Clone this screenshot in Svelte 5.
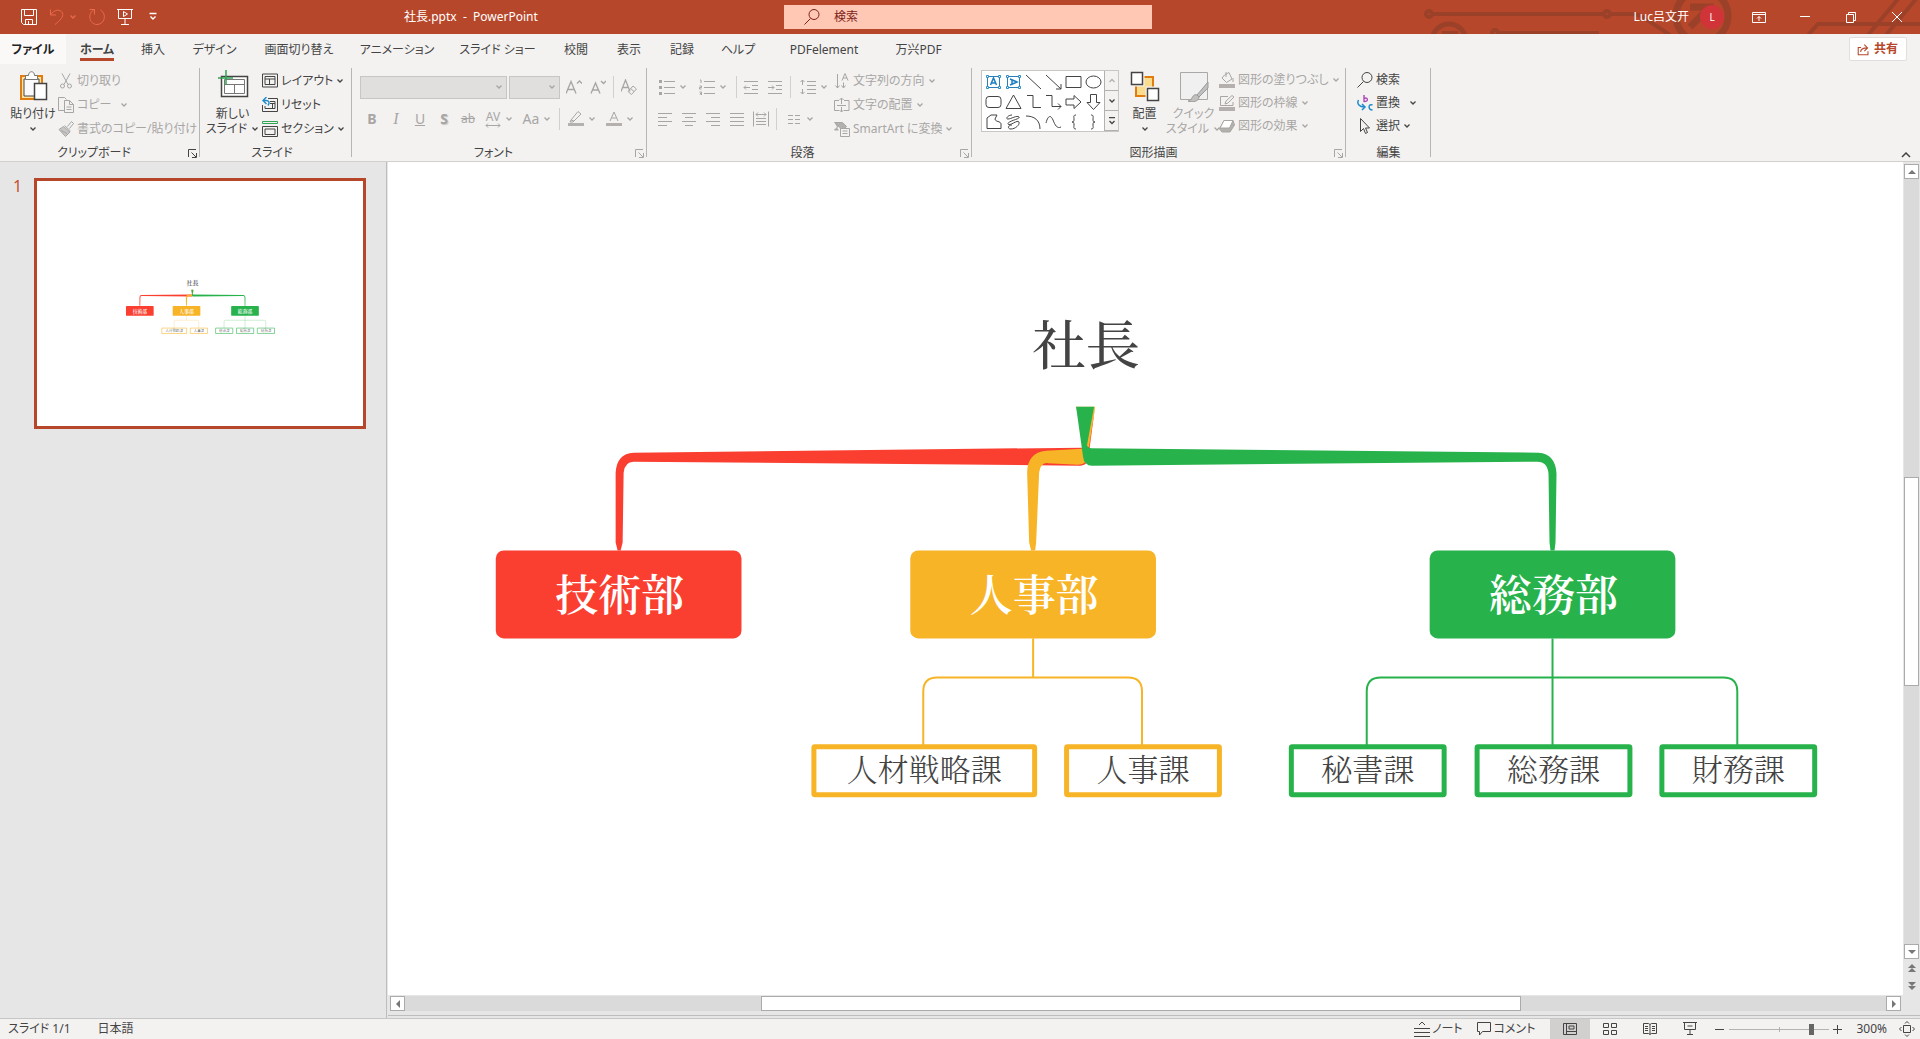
<script>
  const tabs = ['ファイル', 'ホーム', '挿入', 'デザイン', '画面切り替え', 'アニメーション', 'スライド ショー', '校閲', '表示', '記録', 'ヘルプ', 'PDFelement', '万兴PDF'];

  const departments = [
    { name: '技術部', x: 495, color: '#fa3e30' },
    { name: '人事部', x: 910, color: '#f7b427' },
    { name: '総務部', x: 1430, color: '#27b24c' }
  ];

  const sections = [
    { name: '人材戦略課', x: 811, width: 226, color: '#f7b427' },
    { name: '人事課', x: 1064, width: 158, color: '#f7b427' },
    { name: '秘書課', x: 1289, width: 158, color: '#27b24c' },
    { name: '総務課', x: 1475, width: 158, color: '#27b24c' },
    { name: '財務課', x: 1660, width: 158, color: '#27b24c' }
  ];

  // 16x16 icons, drawn with the current text colour
  const icons = {
    save: '<path d="M.5.5h15v15H2.5l-2-2zM3.500.5v6h9v-6M4.500 15.500v-5h7v5M7.500 12v3.500"/>',
    undo: '<path d="M1.500.5v5.500h5.500M1.500 6C5 .5 11-.5 13.500 4c1.500 3.500-3 8-7.500 11.500"/>',
    redo: '<path d="M.5.5h5v5M5.500.5C-2 4 0 15.500 8 15.500s10-11 3.500-14.500"/>',
    present: '<path d="M0 .5h16M1.500.5v9h13v-9M8 9.500v6M4 15.500h8"/><path d="M6.500 2.500v5l4-2.500z"/>',
    customize: '<path d="M4.500 4.500h7M5.500 7.500L8 10l2.500-2.500" stroke-width="1.400"/>',
    search: '<circle cx="10" cy="5.500" r="5"/><path d="M6.500 9.500L.5 15.500"/>',
    ribbon: '<path d="M1.500 3.500h13v10h-13zM1.500 5.500h13M8 12V7.500M6 9.500l2-2 2 2"/>',
    minimize: '<path d="M3 7.500h10"/>',
    restore: '<path d="M3.500 5.500h7v8h-7zM5.500 5.500v-2h7v8h-2"/>',
    close: '<path d="M3 3l10 10M13 3L3 13"/>',
    share: '<path d="M5 5.500H1.500v9h12V10M4.500 11c0-4 3-5 8-5M9 2l4 4-4 4" stroke-width="1.300"/>',
    cut: '<path d="M4 .5l6 11M12 .5l-6 11"/><circle cx="4.500" cy="13" r="2"/><circle cx="11.500" cy="13" r="2"/>',
    copy: '<path d="M6.500 13.500H.5V.5h6l2 2M6.500 3.500h5l4 4v8h-9zM11.500 3.500v4h4M8.500 10h5M8.500 12.500h5"/>',
    brush: '<path d="M9.500 5.500l4-5 2 2-4 5"/><path d="M6.500 4.500l6 5.500"/><path d="M5.500 5.500L1 8.500l6.500 7L12 11z" fill="#c8c6c4"/><path d="M3 9.500l6 3"/>',
    layout: '<path d="M.5 1h15v13H.5zM3 3.500h10v8H3zM3 6h10M7.500 6v5.500"/>',
    reset: '<path d="M6 1.500h9.500v13H.5V8M8 4.500h5v7H3V9M10.500 6.500v5M8 6.500h5"/><path d="M4.500 0L1 3.500 4.500 7M1 3.500h3c3 0 4 2 2 5" stroke="#1e8bcd" stroke-width="1.400"/>',
    section: '<path d="M.5 5.500h15v10H.5zM3 8h10v5.500H3z"/><path d="M.5.500h15v2H.5z" stroke="#31a354"/>',
    grow: '<path d="M0 14.500L5 2.500l5 12M2 10.500h6M11 4.500l2.500-2.500L16 4.500" stroke-width="1.400"/>',
    shrink: '<path d="M1 14.500L5.500 4l4.500 10.500M2.500 11h6M11 2l2.500 2.500L16 2" stroke-width="1.400"/>',
    clear: '<path d="M0 12.500L4.500 1 9 12.500M2 8.500h5" stroke-width="1.300"/><path d="M7 12.500l5-5.500 3.500 3-5 5.500zM9.500 9.500l3.500 3"/>',
    marker: '<path d="M3 9L10 .5 13 3 6 10zM3 9l-1 2h3l1-1"/><path d="M0 13.500h16" stroke-width="3" stroke="#b3b0ad"/>',
    fontcolor: '<path d="M4 10L8 1l4 9M5.500 7h5"/><path d="M0 13.500h16" stroke-width="3" stroke="#b3b0ad"/>',
    bullets: '<path d="M5 2.500h11M5 8.500h11M5 14.500h11"/><path d="M0 2.500h3M0 8.500h3M0 14.500h3" stroke-width="3"/>',
    numbers: '<path d="M5 2.500h11M5 8.500h11M5 14.500h11M1 1h1v3M.5 7h2v1.500h-2V10h2M.5 13h2v3h-2M1 14.500h1.500"/>',
    outdent: '<path d="M1 2.500h14M9 6.500h6M9 10.500h6M1 14.500h14M7 8.500H1M3 6.500l-2 2 2 2"/>',
    indent: '<path d="M1 2.500h14M9 6.500h6M9 10.500h6M1 14.500h14M1 8.500h6M5 6.500l2 2-2 2"/>',
    line: '<path d="M7 2.500h9M7 6.500h9M7 10.500h9M7 14.500h9M2.500 1v5M2.500 10v5M.5 3l2-2 2 2M.5 13l2 2 2-2"/>',
    left: '<path d="M1 2.500h14M1 6.500h9M1 10.500h14M1 14.500h9"/>',
    center: '<path d="M1 2.500h14M4 6.500h8M1 10.500h14M4 14.500h8"/>',
    right: '<path d="M1 2.500h14M6 6.500h9M1 10.500h14M6 14.500h9"/>',
    justify: '<path d="M1 2.500h14M1 6.500h14M1 10.500h14M1 14.500h14"/>',
    distribute: '<path d="M.5.5v15M15.500.5v15M3 7.500h10M3 10.500h10M3 13.500h10M3 3.500h10M5 1.500l-2 2 2 2M11 1.500l2 2-2 2"/>',
    columns: '<path d="M2 4.500h5M2 8.500h5M2 12.500h5M9 4.500h5M9 8.500h5M9 12.500h5"/>',
    direction: '<path d="M3.500 1v14M1.500 12.500l2 2.500 2-2.500M9.500 9.500v5M7.500 12.500l2 2.500 2-2.500M8 7.500l3-7 3 7M9 5h4"/>',
    valign: '<path d="M5 3.500H.5v10H5M10 3.500h5v10h-5M3 8.500h9M7.500 7V1M5.500 3l2-2 2 2M7.500 10v5M5.500 13l2 2 2-2"/>',
    smartart: '<path d="M.5 1.500h8l4 4-2 2H6M.5 1.500l4 3.500-4 4h4" fill="#b3b0ad"/><path d="M6.500 7.500h9v8h-9zM8.500 10h5M8.500 12.500h5" fill="#f3f2f1"/>',
    fill: '<path d="M5.500 3L10 .5 13 7l-5.500 3.500L3 6zM7 0v5M14 6v4"/><path d="M0 14h16" stroke-width="4" stroke="#b3b0ad"/>',
    outline: '<path d="M9 1.500H1.500v9H14V7M6 9l1-3L13 .5 15 2 9 8z"/><path d="M0 14h16" stroke-width="4" stroke="#b3b0ad"/>',
    effects: '<path d="M5 2.500h9L15.500 7 11 14H3L.5 11z" fill="#b3b0ad"/><path d="M5 2.500h9L10.500 10H1z" fill="#fff"/>',
    replace: '<path d="M7 0v7M7 3.500c4-2 5 3.500 0 3" stroke="#ad48b5" stroke-width="1.400"/><path d="M15.500 10c-4-2-5 5 0 5" stroke="#1e8bcd" stroke-width="1.500"/><path d="M1.500 5c-2 4 1 7 6 7M5 9l3 3-3 3" stroke="#1e8bcd" stroke-width="1.500"/>',
    select: '<path d="M3.500.5v13l3-3 2 5 2-1-2-4.500h4z"/>',
    notes: '<path d="M0 7.500h16M0 11.500h16M0 15.500h16M5 4l3-3 3 3"/>',
    comment: '<path d="M1.500 1.500h13v9h-8l-3 3.500v-3.500h-2z"/>',
    normal: '<path d="M1.500 2.500h13v11h-13zM4.500 2.500v11M4.500 10.500h10M7 5h5v3H7z"/>',
    sorter: '<path d="M1.500 2.500h5v4h-5zM9.500 2.500h5v4h-5zM1.500 9.500h5v4h-5zM9.500 9.500h5v4h-5z"/>',
    reading: '<path d="M8 3.500v10M1.500 2.500h5L8 3.500l1.500-1h5v10h-5L8 13.500l-1.500-1h-5zM3 5.500h3M3 7.500h3M3 9.500h3M10 5.500h3M10 7.500h3M10 9.500h3"/>',
    show: '<path d="M1 1.500h14M2.500 1.500v7h11v-7M8 8.500v5M5 13.500h6M5.500 5h5"/>',
    fit: '<path d="M4.500 4.500h7v7h-7zM6 2.500l2-2 2 2M6 13.500l2 2 2-2M2.500 6l-2 2 2 2M13.500 6l2 2-2 2"/>'
  };

  const shapes = [
    '<path d="M2.500 3.500h12v11h-12z" stroke="#2a7fb8"/><path d="M5.500 12l3-7 3 7M6.500 10h4" stroke="#1e7fc0" stroke-width="1.500"/><path d="M1.500 2.500h2v2h-2zM13.500 2.500h2v2h-2zM1.500 13.500h2v2h-2zM13.500 13.500h2v2h-2z" stroke="#2a8fc8" fill="#fff"/>',
    '<path d="M2.500 3.500h12v11h-12z" stroke="#2a7fb8"/><path d="M5 6l7 3-7 3M7 7v4" stroke="#1e7fc0" stroke-width="1.500"/><path d="M1.500 2.500h2v2h-2zM13.500 2.500h2v2h-2zM1.500 13.500h2v2h-2zM13.500 13.500h2v2h-2z" stroke="#2a8fc8" fill="#fff"/>',
    '<path d="M1 2l15 14"/>',
    '<path d="M1 2l15 14M16 11v5h-5"/>',
    '<path d="M1 3.500h15v11H1z"/>',
    '<ellipse cx="8.500" cy="9" rx="7.500" ry="6"/>',
    '<rect x="1" y="3.500" width="15" height="11" rx="3"/>',
    '<path d="M8.500 2L16 15.500H1z"/>',
    '<path d="M2 2.500h6v12h8"/>',
    '<path d="M1 2.500h6v11h9M13 10.500l3 3-3 3"/>',
    '<path d="M1 6h8V2.500L16 9l-7 6.500V12H1z"/>',
    '<path d="M5.500 1.500h6v8H15l-6.500 7-6.500-7h3.500z"/>',
    '<path d="M2 15.500V5l4-3h6l-2 4c0 3 6 2 6 5v4.500z"/>',
    '<path d="M7 2C3 2 0 6 3 6s9-4 11-2-12 4-11 7 10-5 11-2-4 7-8 7-3-4 1-4"/>',
    '<path d="M1 3c8 0 14 4 14 13"/>',
    '<path d="M1 10c2-8 5-8 7-3s4 9 8 7"/>',
    '<path d="M11 2C8 2 9 4 9 6s0 3-2 3c2 0 2 1 2 3s-1 4 2 4"/>',
    '<path d="M6 2c3 0 2 2 2 4s0 3 2 3c-2 0-2 1-2 3s1 4-2 4"/>'
  ];
</script>

{#snippet icon(name)}
  <svg class="icon" viewBox="0 0 16 16" aria-hidden="true">{@html icons[name]}</svg>
{/snippet}

{#snippet chevron()}
  <svg class="chevron" viewBox="0 0 8 8" aria-hidden="true"><path d="M1.500 2.500L4 5l2.500-2.500" /></svg>
{/snippet}

{#snippet command(name, text, menu, wide)}
  <button class="command" class:wide>{@render icon(name)}<span>{text}</span>{#if menu}{@render chevron()}{/if}</button>
{/snippet}

{#snippet tool(name, label, menu)}
  <button class="tool" class:menu aria-label={label}>{@render icon(name)}{#if menu}{@render chevron()}{/if}</button>
{/snippet}

{#snippet caption(text, launcher)}
  <div class="caption">
    <span>{text}</span>
    {#if launcher}
      <button class="launcher" aria-label="{text}の詳細"><svg viewBox="0 0 9 9"><path d="M.5 8V.5H8M3.500 3.500l4.500 4.500M8.500 4v4.500H4" /></svg></button>
    {/if}
  </div>
{/snippet}

{#snippet chart()}
  <path fill="#fa3e30" d="M1095 407L1088 447L1082 448L633 453Q616 454 615 473V543L617 551H620L622 543L623 473Q624 462 633 462L1080 466Q1086 466 1088 460Z" />
  <path fill="#f7b427" d="M1076 407H1095L1089 447L1082 449L1046 451Q1027 453 1027 473L1029 543L1031 551H1035L1036 543L1039 473Q1040 463 1048 463.500L1078 465Q1086 465 1087 458Z" />
  <path fill="#27b24c" d="M1076 407H1094L1087 445Q1087 448 1091 448.500L1539 453Q1556 454 1557 474L1556 543L1555 551H1551L1550 543L1549 474Q1548 462 1538 462L1092 466Q1084 466 1083 457Z" />
  <g fill="none" stroke="#f7b427" stroke-width="2">
    <path d="M1033 639v38M923 746v-54q0-14 14-14h191q14 0 14 14v54" />
  </g>
  <g fill="none" stroke="#27b24c" stroke-width="2">
    <path d="M1553 639v107M1367 746v-54q0-14 14-14h343q14 0 14 14v54" />
  </g>
  <text class="chief" x="1086" y="365">社長</text>
  {#each departments as d}
    <rect x={d.x} y="551" width="246" height="88" rx="8" fill={d.color} />
    <text class="dept" x={d.x + 124} y="612">{d.name}</text>
  {/each}
  {#each sections as s}
    <rect x={s.x + 2.5} y="747.5" width={s.width - 5} height="48" rx="1" fill="#fff" stroke={s.color} stroke-width="5" />
    <text class="sect" x={s.x + s.width / 2} y="782">{s.name}</text>
  {/each}
{/snippet}

<div class="app">
  <header class="titlebar">
    <div class="quick">
      <button aria-label="上書き保存">{@render icon('save')}</button>
      <button class="faded" aria-label="元に戻す">{@render icon('undo')}{@render chevron()}</button>
      <button class="faded" aria-label="やり直し">{@render icon('redo')}</button>
      <button aria-label="スライド ショーの開始">{@render icon('present')}</button>
      <button aria-label="ユーザー設定">{@render icon('customize')}</button>
    </div>
    <div class="title">社長.pptx&nbsp; -&nbsp; PowerPoint</div>
    <label class="search">{@render icon('search')}<input type="text" placeholder="検索" aria-label="検索" /></label>
    <div class="account">
      <svg class="circuit" viewBox="0 0 500 34" aria-hidden="true">
        <g fill="none" stroke="#9c4129" stroke-width="4">
          <circle cx="9" cy="14" r="3" /><path d="M13 14h170M191 14h20q8 0 13 4l26 17" />
          <circle cx="187" cy="14" r="3" /><circle cx="75" cy="33" r="3" /><path d="M79 33h100" />
          <circle cx="29" cy="41" r="17" stroke-width="5" /><path d="M22 33h14v6" />
          <circle cx="282" cy="16" r="26" stroke-width="7" /><path d="M270 7h20v18M290 7l-20 20" stroke-width="7" />
          <path d="M388 35l10-11h102M448 35l30-36M466 35l30-36" />
        </g>
      </svg>
      <span class="user">Luc吕文开</span>
      <span class="avatar">L</span>
      <button aria-label="リボンの表示オプション">{@render icon('ribbon')}</button>
      <button aria-label="最小化">{@render icon('minimize')}</button>
      <button aria-label="元に戻す (縮小)">{@render icon('restore')}</button>
      <button aria-label="閉じる">{@render icon('close')}</button>
    </div>
  </header>

  <nav class="tabs">
    <div class="tab-list">
      {#each tabs as tab, i}
        <button class:file={i === 0} class:active={i === 1}><span>{tab}</span></button>
      {/each}
    </div>
    <button class="share">{@render icon('share')}共有</button>
  </nav>

  <section class="ribbon">
    <div class="group clipboard">
      <div class="body">
        <button class="big">
          <svg class="art" viewBox="0 0 32 32" aria-hidden="true">
            <path d="M4 6h21v23H4z" fill="#ffe2a0" stroke="#e07c10" stroke-width="2" />
            <path d="M7 9h15v17H7z" fill="#fafafa" />
            <path d="M8.500 9.500v-4h3c0-5 6-5 6 0h3v4z" fill="#fff" stroke="#777" />
            <path d="M17.500 13.500h12v16h-12z" fill="#fff" stroke="#444" stroke-width="1.500" />
          </svg>
          <span>貼り付け</span>
          {@render chevron()}
        </button>
        <div class="stack disabled">
          {@render command('cut', '切り取り')}
          {@render command('copy', 'コピー', true, true)}
          {@render command('brush', '書式のコピー/貼り付け')}
        </div>
      </div>
      {@render caption('クリップボード', true)}
    </div>

    <div class="group slides">
      <div class="body">
        <button class="big">
          <svg class="art" viewBox="0 0 32 32" aria-hidden="true">
            <path d="M4.500 6.500h26v20h-26z" fill="#fff" stroke="#444" stroke-width="1.500" />
            <path d="M7.500 9.500h20v14h-20zM7.500 14.500h20M17.500 14.500v9" fill="none" stroke="#777" />
            <path d="M9 0v15M1 8h15" stroke="#31a354" stroke-width="1.500" />
          </svg>
          <span>新しい</span>
          <span>スライド {@render chevron()}</span>
        </button>
        <div class="stack">
          {@render command('layout', 'レイアウト', true)}
          {@render command('reset', 'リセット')}
          {@render command('section', 'セクション', true)}
        </div>
      </div>
      {@render caption('スライド')}
    </div>

    <div class="group font disabled">
      <div class="body tools">
        <div class="tool-row">
          <span class="combo family"><select aria-label="フォント" disabled></select>{@render chevron()}</span>
          <span class="combo size"><select aria-label="フォント サイズ" disabled></select>{@render chevron()}</span>
          {@render tool('grow', 'フォント サイズの拡大')}
          {@render tool('shrink', 'フォント サイズの縮小')}
          <i class="rule"></i>
          {@render tool('clear', '書式のクリア')}
        </div>
        <div class="tool-row">
          <button class="tool letter"><b>B</b></button>
          <button class="tool letter serif"><em>I</em></button>
          <button class="tool letter"><u>U</u></button>
          <button class="tool letter shadow"><b>S</b></button>
          <button class="tool letter small"><s>ab</s></button>
          <button class="tool menu letter small"><span class="av">AV<svg viewBox="0 0 16 5" aria-hidden="true"><path d="M1 2.500h14M3 .5l-2 2 2 2M13 .5l2 2-2 2" /></svg></span>{@render chevron()}</button>
          <button class="tool menu letter">Aa{@render chevron()}</button>
          <i class="rule"></i>
          {@render tool('marker', '蛍光ペンの色', true)}
          {@render tool('fontcolor', 'フォントの色', true)}
        </div>
      </div>
      {@render caption('フォント', true)}
    </div>

    <div class="group paragraph disabled">
      <div class="body">
        <div class="tools">
          <div class="tool-row">
            {@render tool('bullets', '箇条書き', true)}
            {@render tool('numbers', '段落番号', true)}
            <i class="rule"></i>
            {@render tool('outdent', 'インデントを減らす')}
            {@render tool('indent', 'インデントを増やす')}
            <i class="rule"></i>
            {@render tool('line', '行間', true)}
          </div>
          <div class="tool-row">
            {@render tool('left', '左揃え')}
            {@render tool('center', '中央揃え')}
            {@render tool('right', '右揃え')}
            {@render tool('justify', '両端揃え')}
            {@render tool('distribute', '均等割り付け')}
            <i class="rule"></i>
            {@render tool('columns', '段組み', true)}
          </div>
        </div>
        <div class="stack">
          {@render command('direction', '文字列の方向', true)}
          {@render command('valign', '文字の配置', true)}
          {@render command('smartart', 'SmartArt に変換', true)}
        </div>
      </div>
      {@render caption('段落', true)}
    </div>

    <div class="group drawing">
      <div class="body">
        <div class="gallery">
          <div class="shapes">
            {#each shapes as shape, i}
              <button aria-label="図形 {i + 1}"><svg viewBox="0 0 17 17">{@html shape}</svg></button>
            {/each}
          </div>
          <div class="gallery-nav">
            <button class="off" aria-label="前の行"><svg viewBox="0 0 8 8"><path d="M1.500 5L4 2.500 6.500 5" /></svg></button>
            <button aria-label="次の行"><svg viewBox="0 0 8 8"><path d="M1.500 2.500L4 5l2.500-2.500" /></svg></button>
            <button aria-label="その他"><svg viewBox="0 0 8 8"><path d="M1 .5h6M1.500 4L4 6.500 6.500 4" /></svg></button>
          </div>
        </div>
        <button class="big">
          <svg class="art" viewBox="0 0 32 32" aria-hidden="true">
            <path d="M7 7h17v19H7z" fill="#fbdc8e" stroke="#e07c10" stroke-width="2" />
            <path d="M2.500 2.500h11v12h-11zM18.500 18.500h11v12h-11z" fill="#fff" stroke="#f3f2f1" stroke-width="4" />
            <path d="M2.500 2.500h11v12h-11zM18.500 18.500h11v12h-11z" fill="#fff" stroke="#444" stroke-width="1.500" />
          </svg>
          <span>配置</span>
          {@render chevron()}
        </button>
        <button class="big disabled">
          <svg class="art" viewBox="0 0 32 32" aria-hidden="true">
            <path d="M2.500 2.500h27v27h-27z" fill="#f0f0f0" stroke="#aaa8a6" />
            <path d="M30 12L19 25l2 2 9-9zM19 25c-3-1-4 1-5 3s-2 3-4 3c5 2 11 0 11-4z" fill="#c2c0be" stroke="#999" />
          </svg>
          <span>クイック</span>
          <span>スタイル {@render chevron()}</span>
        </button>
        <div class="stack tight disabled">
          {@render command('fill', '図形の塗りつぶし', true)}
          {@render command('outline', '図形の枠線', true)}
          {@render command('effects', '図形の効果', true)}
        </div>
      </div>
      {@render caption('図形描画', true)}
    </div>

    <div class="group editing">
      <div class="body">
        <div class="stack tight">
          {@render command('search', '検索')}
          {@render command('replace', '置換', true, true)}
          {@render command('select', '選択', true)}
        </div>
      </div>
      {@render caption('編集')}
    </div>
    <button class="collapse" aria-label="リボンを折りたたむ"><svg viewBox="0 0 10 6"><path d="M1 5l4-4 4 4" /></svg></button>
  </section>

  <main class="workspace">
    <aside class="slides-pane">
      <span class="number">1</span>
      <button class="thumb" aria-label="スライド 1">
        <svg viewBox="-296 -560 2898 2178">{@render chart()}</svg>
      </button>
    </aside>
    <div class="editor">
      <svg class="canvas" viewBox="388 162 1515 834">{@render chart()}</svg>
      <div class="vscroll">
        <button aria-label="上へ"><svg viewBox="0 0 8 8"><path d="M0 6l4-4 4 4z" /></svg></button>
        <div class="vtrack"><span></span></div>
        <button aria-label="下へ"><svg viewBox="0 0 8 8"><path d="M0 2l4 4 4-4z" /></svg></button>
        <button class="plain" aria-label="前のスライド"><svg viewBox="0 0 8 8"><path d="M0 4l4-4 4 4zM0 8l4-4 4 4z" /></svg></button>
        <button class="plain" aria-label="次のスライド"><svg viewBox="0 0 8 8"><path d="M0 0l4 4 4-4zM0 4l4 4 4-4z" /></svg></button>
      </div>
      <div class="hscroll">
        <button aria-label="左へ"><svg viewBox="0 0 8 8"><path d="M6 0L2 4l4 4z" /></svg></button>
        <div class="htrack"><span></span></div>
        <button aria-label="右へ"><svg viewBox="0 0 8 8"><path d="M2 0l4 4-4 4z" /></svg></button>
      </div>
    </div>
  </main>

  <footer class="status">
    <span>スライド 1/1</span>
    <span class="lang">日本語</span>
    <button class="note">{@render icon('notes')}ノート</button>
    <button class="remark">{@render icon('comment')}コメント</button>
    <div class="views">
      <button class="on" aria-label="標準">{@render icon('normal')}</button>
      <button aria-label="スライド一覧">{@render icon('sorter')}</button>
      <button aria-label="閲覧表示">{@render icon('reading')}</button>
      <button aria-label="スライド ショー">{@render icon('show')}</button>
    </div>
    <button class="step" aria-label="縮小"><svg viewBox="0 0 9 9"><path d="M0 4.500h9" /></svg></button>
    <input type="range" min="0" max="100" value="84" aria-label="ズーム" />
    <button class="step" aria-label="拡大"><svg viewBox="0 0 9 9"><path d="M0 4.500h9M4.500 0v9" /></svg></button>
    <span class="percent">300%</span>
    <button class="step" aria-label="ウィンドウに合わせる">{@render icon('fit')}</button>
  </footer>
</div>

<style>
  :global(body) {
    margin: 0;
  }

  .app {
    display: flex;
    flex-direction: column;
    height: 100vh;
    font-family: "Noto Sans", "Noto Sans CJK JP", sans-serif;
    font-feature-settings: "palt";
    font-size: 12px;
    line-height: 16px;
    color: #444;
    background: #e6e6e6;
    overflow: hidden;
  }

  button {
    display: flex;
    align-items: center;
    padding: 0;
    border: 0;
    background: none;
    color: inherit;
    font: inherit;
    font-feature-settings: inherit;
    white-space: nowrap;
  }

  svg {
    display: block;
    fill: none;
    stroke: currentColor;
    flex: none;
  }

  .icon {
    width: 16px;
    height: 16px;
  }

  .chevron {
    width: 8px;
    height: 8px;
    stroke-width: 1.3;
  }

  .titlebar {
    display: grid;
    grid-template-columns: 404px 380px 368px 1fr;
    height: 34px;
    flex: none;
    align-items: center;
    background: #b7472a;
    color: #fff;
  }

  .quick {
    display: flex;
    align-items: center;
    gap: 12px;
    padding-left: 21px;
  }

  .quick button {
    gap: 4px;
  }

  .faded {
    color: #e8694b;
  }

  .search {
    display: flex;
    align-items: center;
    gap: 14px;
    height: 24px;
    padding-left: 20px;
    background: #ffc8b4;
    color: #7d1f1a;
  }

  .search input {
    flex: 1;
    padding: 0;
    border: 0;
    background: none;
    font: inherit;
    color: inherit;
    outline: none;
  }

  .search input::placeholder {
    color: #7d1f1a;
  }

  .account {
    position: relative;
    display: flex;
    align-items: center;
    justify-content: flex-end;
    height: 34px;
    padding-right: 15px;
  }

  .circuit {
    position: absolute;
    right: 0;
    top: 0;
    width: 500px;
    height: 34px;
  }

  .user,
  .avatar,
  .account button {
    position: relative;
  }

  .avatar {
    width: 24px;
    height: 24px;
    margin: 0 27px 0 11px;
    border-radius: 12px;
    background: #d13438;
    font-size: 10px;
    line-height: 24px;
    text-align: center;
  }

  .account button + button {
    margin-left: 30px;
  }

  .tabs {
    display: flex;
    justify-content: space-between;
    align-items: center;
    height: 30px;
    flex: none;
    padding-right: 13px;
    background: #f3f2f1;
  }

  .tab-list {
    display: grid;
    grid-template-columns: 66px 62px 50px 73px 96px 100px 101px 56px 50px 56px 56px 116px 73px;
    height: 30px;
  }

  .tab-list button {
    justify-content: center;
  }

  .tab-list span {
    padding-top: 4px;
    border-bottom: 3px solid transparent;
  }

  .tab-list .file {
    background: #faf9f8;
    color: #222;
    font-weight: 700;
  }

  .tab-list .active {
    font-weight: 700;
  }

  .tab-list .active span {
    border-color: #b7472a;
  }

  .share {
    gap: 4px;
    height: 24px;
    padding: 0 8px 0 7px;
    border: 1px solid #e1dfdd;
    border-radius: 2px;
    background: #fff;
    color: #b7472a;
    font-weight: 700;
  }

  .share .icon {
    width: 13px;
    height: 13px;
  }

  .ribbon {
    display: flex;
    height: 97px;
    flex: none;
    background: #f3f2f1;
    border-bottom: 1px solid #d2d0ce;
  }

  .group {
    display: flex;
    flex-direction: column;
    justify-content: space-between;
    box-sizing: border-box;
    height: 89px;
    margin-top: 4px;
    border-right: 1px solid #b8b6b4;
  }

  .clipboard { width: 200px; padding-left: 8px; }
  .slides { width: 152px; padding-left: 3px; }
  .font { width: 295px; padding-left: 8px; }
  .paragraph { width: 325px; padding-left: 6px; }
  .drawing { width: 374px; padding-left: 9px; }
  .editing { width: 85px; padding-left: 11px; }

  .disabled {
    color: #a8a6a4;
  }

  .body {
    display: flex;
  }

  .stack {
    display: grid;
    grid-auto-rows: 24px;
    padding-top: 1px;
  }

  .tight {
    grid-auto-rows: 23px;
    padding-top: 0;
  }

  .command {
    gap: 3px;
  }

  .wide .chevron {
    margin-left: 6px;
  }

  .big {
    flex-direction: column;
    width: 50px;
    height: 68px;
    padding-top: 2px;
    line-height: 15px;
  }

  .slides .big {
    width: 59px;
  }

  .drawing .body {
    gap: 2px;
  }

  .drawing .big {
    width: 47px;
  }

  .art {
    width: 32px;
    height: 32px;
    margin-bottom: 4px;
  }

  .big span {
    display: flex;
    align-items: center;
    gap: 4px;
  }

  .big > .chevron {
    margin-top: 4px;
  }

  .caption {
    display: flex;
    align-items: center;
    height: 8px;
    margin-left: -8px;
    padding-right: 2px;
    color: #444;
  }

  .caption span {
    flex: 1;
    text-align: center;
  }

  .launcher svg {
    width: 9px;
    height: 9px;
  }

  .disabled .launcher,
  .drawing .launcher {
    color: #a8a6a4;
  }

  .tools {
    display: flex;
    flex-direction: column;
    gap: 8px;
    padding-top: 7px;
  }

  .paragraph .tools {
    width: 181px;
  }

  .tool-row {
    display: flex;
    align-items: center;
    height: 24px;
  }

  .combo {
    display: flex;
    align-items: center;
    justify-content: flex-end;
    box-sizing: border-box;
    height: 23px;
    margin-right: 2px;
    padding-right: 3px;
    border: 1px solid #c8c6c4;
    background: #e1dfdd;
  }

  .family { width: 147px; }
  .size { width: 51px; }

  select {
    flex: 1;
    min-width: 0;
    border: 0;
    background: none;
    appearance: none;
  }

  .tool {
    justify-content: center;
    width: 24px;
    height: 24px;
  }

  .menu {
    gap: 4px;
    width: 38px;
  }

  .paragraph .menu {
    width: 40px;
  }

  .letter {
    font-size: 14px;
  }

  .small {
    font-size: 12px;
  }

  .serif {
    font-family: "Liberation Serif", serif;
    font-size: 16px;
  }

  .shadow {
    text-shadow: 1px 1px 1px #c8c6c4;
  }

  .av {
    line-height: 12px;
  }

  .av svg {
    width: 16px;
    height: 5px;
  }

  .rule {
    width: 1px;
    height: 22px;
    margin: 0 3px;
    background: #d2d0ce;
  }

  .gallery {
    display: flex;
    box-sizing: border-box;
    width: 138px;
    height: 62px;
    margin-top: 2px;
    border: 1px solid #c8c6c4;
    background: #fff;
  }

  .shapes {
    display: grid;
    flex: 1;
    grid-template-columns: repeat(6, 20px);
    grid-template-rows: repeat(3, 20px);
    padding-left: 1px;
  }

  .shapes button {
    justify-content: center;
  }

  .shapes svg {
    width: 17px;
    height: 17px;
  }

  .gallery-nav {
    display: grid;
    width: 14px;
    background: #f3f2f1;
  }

  .gallery-nav button {
    justify-content: center;
    border-left: 1px solid #b3b0ad;
    border-bottom: 1px solid #b3b0ad;
  }

  .gallery-nav svg {
    width: 8px;
    height: 8px;
    stroke-width: 1.3;
  }

  .gallery-nav .off {
    color: #b3b0ad;
  }

  .collapse {
    align-self: flex-end;
    margin: 0 9px 3px auto;
  }

  .collapse svg {
    width: 10px;
    height: 6px;
    stroke-width: 1.5;
  }

  .workspace {
    display: flex;
    flex: 1;
    min-height: 0;
  }

  .slides-pane {
    display: flex;
    align-items: flex-start;
    box-sizing: border-box;
    width: 387px;
    flex: none;
    padding: 16px 20px 0 13px;
    border-right: 1px solid #bdbdbd;
  }

  .number {
    width: 21px;
    color: #c8502f;
    font-size: 16px;
  }

  .thumb {
    flex: 1;
    border: 3px solid #b7472a;
    background: #fff;
  }

  .thumb svg {
    width: 100%;
    stroke: none;
  }

  .editor {
    display: grid;
    flex: 1;
    grid-template-columns: 1fr 17px;
    grid-template-rows: 1fr 16px;
    margin: 0 0 2px 1px;
    padding-bottom: 4px;
    border-bottom: 1px solid #bdbdbd;
    min-width: 0;
    min-height: 0;
  }

  .canvas {
    width: 100%;
    height: 100%;
    min-height: 0;
    background: #fff;
    stroke: none;
  }

  text {
    font-family: "Noto Serif CJK JP", "Noto Sans CJK JP", serif;
    font-feature-settings: normal;
    fill: #444;
    text-anchor: middle;
  }

  .chief {
    font-size: 54px;
    font-weight: 500;
  }

  .dept {
    font-size: 43px;
    font-weight: 600;
    fill: #fff;
  }

  .sect {
    font-size: 31px;
    font-weight: 300;
  }

  .vscroll {
    display: flex;
    flex-direction: column;
    padding: 2px 1px 0;
  }

  .vscroll button,
  .hscroll button {
    justify-content: center;
    box-sizing: border-box;
    width: 15px;
    height: 15px;
    border: 1px solid #ababab;
    background: #fff;
    color: #777;
  }

  .vscroll svg,
  .hscroll svg {
    width: 8px;
    height: 8px;
    fill: #777;
    stroke: none;
  }

  .vscroll .plain {
    height: 18px;
    border: 0;
    background: none;
  }

  .vtrack,
  .htrack {
    display: grid;
    flex: 1;
    background: #dadada;
  }

  .vtrack {
    grid-template-rows: 298fr 208fr 258fr;
  }

  .htrack {
    grid-template-columns: 356fr 759fr 365fr;
  }

  .vtrack span,
  .htrack span {
    border: 1px solid #ababab;
    background: #fff;
  }

  .vtrack span { grid-row: 2; }
  .htrack span { grid-column: 2; }

  .hscroll {
    display: flex;
    padding: 1px 2px 0;
  }

  .status {
    display: flex;
    align-items: center;
    height: 20px;
    flex: none;
    padding: 0 5px 0 8px;
    border-top: 1px solid #c6c6c6;
    background: #f3f2f1;
  }

  .lang {
    margin-left: 27px;
  }

  .note {
    gap: 2px;
    margin-left: auto;
  }

  .remark {
    gap: 2px;
    margin: 0 15px 0 13px;
  }

  .views {
    display: flex;
    height: 20px;
  }

  .views button {
    justify-content: center;
    width: 40px;
  }

  .views .on {
    background: #d2d0ce;
  }

  .step svg {
    min-width: 9px;
    height: 9px;
  }

  .step .icon {
    height: 16px;
  }

  .views + .step {
    margin-left: 5px;
  }

  input[type="range"] {
    width: 100px;
    height: 11px;
    margin: 0 4px 0 5px;
    appearance: none;
    background:
      linear-gradient(#b3b3b3, #b3b3b3) center / 1px 5px no-repeat,
      linear-gradient(#b3b3b3, #b3b3b3) center / 100% 1px no-repeat;
  }

  input[type="range"]::-webkit-slider-thumb {
    appearance: none;
    width: 5px;
    height: 11px;
    background: #666;
  }

  .percent {
    margin: 0 12px 0 14px;
  }
</style>
